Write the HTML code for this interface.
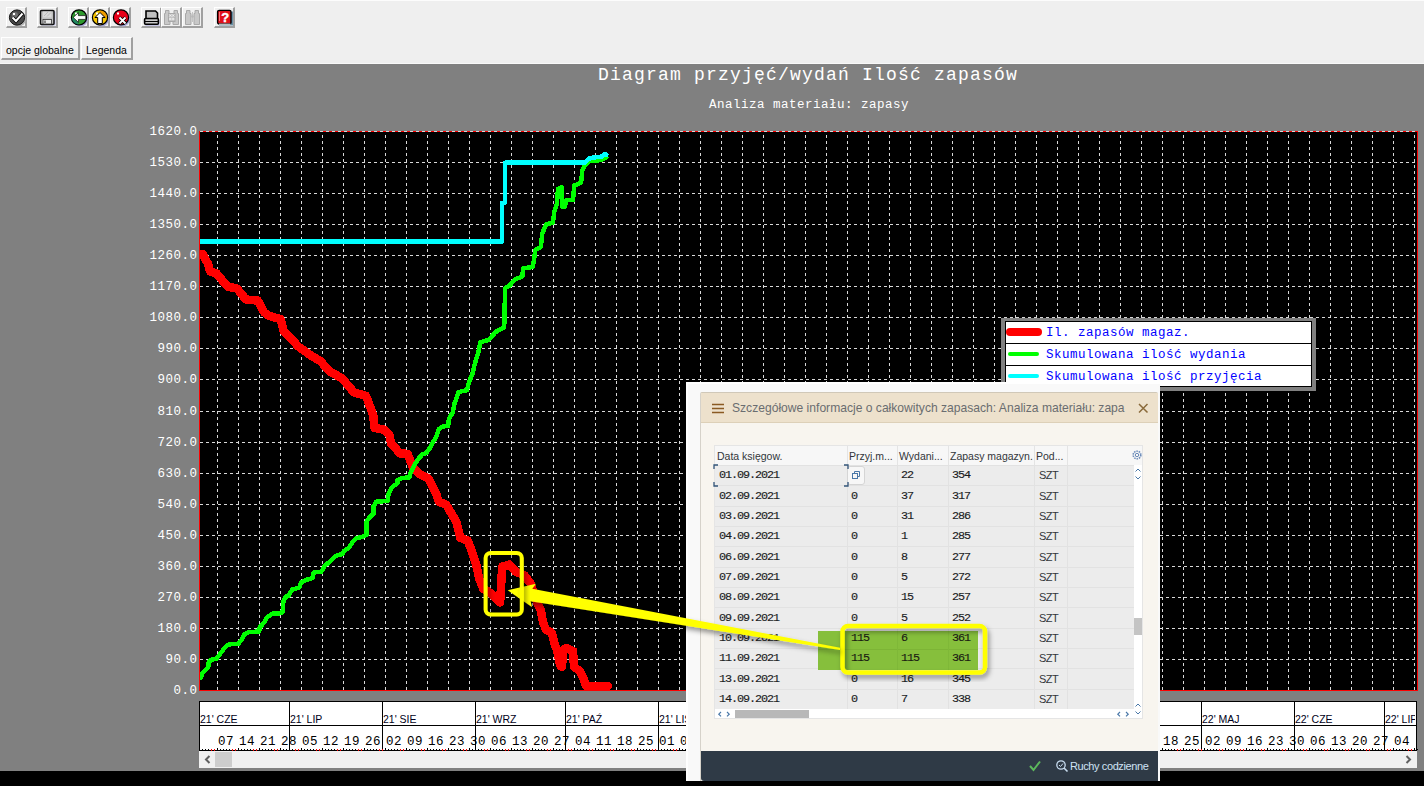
<!DOCTYPE html>
<html><head><meta charset="utf-8">
<style>
html,body{margin:0;padding:0;}
body{width:1424px;height:786px;overflow:hidden;position:relative;background:#808080;font-family:"Liberation Sans",sans-serif;}
.abs{position:absolute;}
.mono{font-family:"Liberation Mono",monospace;}
#tb{position:absolute;left:0;top:0;width:1424px;height:64px;background:#efefef;}
.tbtn{position:absolute;top:7px;width:21px;height:21px;box-sizing:border-box;border-style:solid;border-width:1px 2px 2px 1px;border-color:#fff #a0a0a0 #a0a0a0 #fff;background:#f0f0f0;}
.tbtn svg{position:absolute;left:1px;top:1px;}
.btn{position:absolute;top:38px;height:23px;box-sizing:border-box;border-style:solid;border-width:1px 2px 2px 1px;border-color:#fff #a0a0a0 #a0a0a0 #fff;background:#f0f0f0;font-size:10.5px;color:#000;line-height:14px;padding-top:5px;padding-left:4px;white-space:nowrap;}
.yl{position:absolute;left:140px;width:57.5px;text-align:right;color:#fff;font-size:12.5px;letter-spacing:0.5px;line-height:14px;font-family:"Liberation Mono",monospace;}
.ml{position:absolute;top:11px;font-size:10.5px;line-height:14px;color:#000020;white-space:nowrap;}
.dl{position:absolute;top:34px;font-size:12.5px;letter-spacing:0.5px;line-height:14px;color:#000;font-family:"Liberation Mono",monospace;white-space:nowrap;}
.dn{font-family:"Liberation Mono",monospace;font-size:11.8px;line-height:14px;letter-spacing:-1.08px;color:#1a1c1e;-webkit-text-stroke:0.15px #1a1c1e;white-space:nowrap;}
.lg{position:absolute;left:1046px;font-size:12.5px;letter-spacing:0.5px;line-height:14px;color:#0000ff;font-family:"Liberation Mono",monospace;white-space:nowrap;}
</style></head><body>

<div id="tb"></div>
<div class="abs" style="left:0;top:0;width:1424px;height:1px;background:#fcfcfc"></div>
<div class="abs" style="left:0;top:63px;width:1424px;height:1px;background:#f8f8f8"></div>
<div class="tbtn" style="left:6px"><svg width="19" height="19"><circle cx="10.5" cy="10" r="7.5" fill="#b0b0b0"/><circle cx="9" cy="8.5" r="7.6" fill="#4a4a4a" stroke="#111" stroke-width="1"/><circle cx="7" cy="6" r="3" fill="#707070"/><rect x="5" y="4" width="2" height="2" fill="#fff"/><path d="M4.5 8.5 L8 12 L14.5 4.5" stroke="#000" stroke-width="3.6" fill="none"/><path d="M4.5 8.5 L8 12 L14.5 4.5" stroke="#fff" stroke-width="2" fill="none"/></svg></div>
<div class="tbtn" style="left:37px"><svg width="19" height="19"><rect x="2.5" y="2.5" width="14" height="14" fill="#a8a8e0" opacity="0.6"/><rect x="1.5" y="1.5" width="13.5" height="14" rx="1" fill="#c0c0c0" stroke="#111" stroke-width="1.5"/><rect x="4" y="2.5" width="8.5" height="6" fill="#d8d8d8"/><path d="M5 7 L9 3 M8 7.5 L12 3.5" stroke="#bbb" stroke-width="1"/><rect x="4" y="10.5" width="8.5" height="4.5" fill="#e8e8e8" stroke="#333" stroke-width="0.8"/><rect x="5" y="11.5" width="2" height="2.5" fill="#888"/></svg></div>
<div class="tbtn" style="left:68px"><svg width="19" height="19"><circle cx="10.5" cy="10" r="7.5" fill="#a8a8d8"/><circle cx="9" cy="8.4" r="7.6" fill="#2e9a2e" stroke="#000" stroke-width="1.2"/><path d="M2 9 A7 7 0 0 0 8 15.5 L9 8 Z" fill="#1a8080" opacity="0.6"/><rect x="5" y="3.5" width="2" height="2" fill="#fff"/><path d="M3.2 8.4 L8.4 3.6 L8.4 6.6 L15.8 6.6 L15.8 10.4 L8.4 10.4 L8.4 13.4 Z" fill="#fff" stroke="#000" stroke-width="0.7"/></svg></div>
<div class="tbtn" style="left:89px"><svg width="19" height="19"><circle cx="10.5" cy="10" r="7.5" fill="#a8a8d8"/><circle cx="9" cy="8.4" r="7.6" fill="#f5c400" stroke="#000" stroke-width="1.2"/><path d="M9 1.5 A7 7 0 0 1 16 8.4 L9 8.4 Z" fill="#f08c00" opacity="0.7"/><rect x="5" y="3.5" width="2" height="2" fill="#fff"/><path d="M9 3.5 L14 8.5 L11.3 8.5 L11.3 14.5 L6.7 14.5 L6.7 8.5 L4 8.5 Z" fill="#fff" stroke="#000" stroke-width="1"/></svg></div>
<div class="tbtn" style="left:110px"><svg width="19" height="19"><circle cx="10.5" cy="10" r="7.5" fill="#a8a8d8"/><circle cx="9" cy="8.4" r="7.6" fill="#e8001a" stroke="#000" stroke-width="1.2"/><rect x="5" y="3.5" width="2" height="2" fill="#fff"/><path d="M7.5 8.5 L13.5 14.5 M13.5 8.5 L7.5 14.5" stroke="#000" stroke-width="3.4"/><path d="M7.5 8.5 L13.5 14.5 M13.5 8.5 L7.5 14.5" stroke="#fff" stroke-width="1.8"/></svg></div>
<div class="tbtn" style="left:141px"><svg width="19" height="19"><path d="M3 2 L12.5 2 L14.5 4 L14.5 10 L3 10 Z" fill="#c0c0c0" stroke="#000" stroke-width="1.6"/><rect x="2.5" y="11" width="14" height="6" fill="#a8a8e0" opacity="0.6"/><rect x="1.6" y="9.5" width="13.8" height="5.8" rx="1" fill="#c8c8c8" stroke="#000" stroke-width="1.6"/><path d="M2 12.5 H15" stroke="#000" stroke-width="1"/></svg></div>
<div class="tbtn" style="left:161px"><svg width="19" height="19"><path d="M2.5 1.5H6V4.5H7V15.5H1.5V4.5H2.5Z M11 1.5H14.5V4.5H15.5V15.5H10V4.5H11Z" fill="#c8c8c8" stroke="#a8a8a8" stroke-width="1"/><rect x="5.5" y="4.5" width="6.5" height="8" fill="#c4c4c4" stroke="#a8a8a8" stroke-width="1"/><path d="M6.3 5.5 L8.3 7.5 M8.3 5.5 L6.3 7.5 M9.3 5.5 L11.3 7.5 M11.3 5.5 L9.3 7.5 M6.3 9 L8.3 11 M8.3 9 L6.3 11 M9.3 9 L11.3 11 M11.3 9 L9.3 11" stroke="#f4f4f4" stroke-width="0.9"/></svg></div>
<div class="tbtn" style="left:182px"><svg width="19" height="19"><path d="M2.5 1.5H6V4.5H7V15.5H1.5V4.5H2.5Z M11 1.5H14.5V4.5H15.5V15.5H10V4.5H11Z" fill="#c8c8c8" stroke="#a8a8a8" stroke-width="1"/><circle cx="8.5" cy="7.5" r="1.3" fill="#b8b8b8"/><path d="M8.5 3 V13" stroke="#b8b8b8" stroke-width="0.8"/></svg></div>
<div class="tbtn" style="left:214px"><svg width="19" height="19"><rect x="3" y="2.5" width="14" height="14" fill="#6890a8"/><rect x="1.6" y="1.4" width="13.4" height="13.6" rx="1.5" fill="#e0101a" stroke="#000" stroke-width="1.4"/><path d="M3 15.2 H14.5" stroke="#fff" stroke-width="1"/><path d="M3.5 3 V12" stroke="#ff9090" stroke-width="0.8"/><text x="9.3" y="12.6" font-size="13" font-weight="bold" text-anchor="middle" fill="#fff" stroke="#fff" stroke-width="0.4" font-family="Liberation Sans">?</text></svg></div>
<div class="btn" style="left:1px;top:37px;width:79px">opcje globalne</div>
<div class="btn" style="left:81px;top:37px;width:52px">Legenda</div>
<div class="abs" style="left:0;top:771px;width:1424px;height:15px;background:#000"></div>
<div class="abs mono" style="left:598px;top:64px;font-size:18px;letter-spacing:1.2px;line-height:22px;color:#fff;white-space:nowrap">Diagram przyjęć/wydań Ilość zapasów</div>
<div class="abs mono" style="left:709px;top:98px;font-size:12.5px;letter-spacing:0.5px;line-height:14px;color:#fff;white-space:nowrap">Analiza materiału: zapasy</div>
<div class="yl" style="top:125px">1620.0</div>
<div class="yl" style="top:156px">1530.0</div>
<div class="yl" style="top:187px">1440.0</div>
<div class="yl" style="top:218px">1350.0</div>
<div class="yl" style="top:249px">1260.0</div>
<div class="yl" style="top:280px">1170.0</div>
<div class="yl" style="top:311px">1080.0</div>
<div class="yl" style="top:342px">990.0</div>
<div class="yl" style="top:373px">900.0</div>
<div class="yl" style="top:405px">810.0</div>
<div class="yl" style="top:436px">720.0</div>
<div class="yl" style="top:467px">630.0</div>
<div class="yl" style="top:498px">540.0</div>
<div class="yl" style="top:529px">450.0</div>
<div class="yl" style="top:560px">360.0</div>
<div class="yl" style="top:591px">270.0</div>
<div class="yl" style="top:622px">180.0</div>
<div class="yl" style="top:653px">90.0</div>
<div class="yl" style="top:684px">0.0</div>
<svg class="abs" style="left:0;top:0" width="1424" height="786" shape-rendering="crispEdges">
<rect x="199" y="131" width="1219" height="560" fill="#000"/>
<path d="M200 162.5H1417 M200 193.5H1417 M200 224.5H1417 M200 255.5H1417 M200 286.5H1417 M200 317.5H1417 M200 348.5H1417 M200 379.5H1417 M200 411.5H1417 M200 442.5H1417 M200 473.5H1417 M200 504.5H1417 M200 535.5H1417 M200 566.5H1417 M200 597.5H1417 M200 628.5H1417 M200 659.5H1417" stroke="#d8d8d8" stroke-width="1" stroke-dasharray="3 3" fill="none"/>
<path d="M217.5 132V690 M238.5 132V690 M259.5 132V690 M280.5 132V690 M301.5 132V690 M322.5 132V690 M343.5 132V690 M364.5 132V690 M385.5 132V690 M406.5 132V690 M427.5 132V690 M448.5 132V690 M469.5 132V690 M490.5 132V690 M511.5 132V690 M532.5 132V690 M553.5 132V690 M574.5 132V690 M595.5 132V690 M616.5 132V690 M637.5 132V690 M658.5 132V690 M679.5 132V690 M700.5 132V690 M721.5 132V690 M742.5 132V690 M763.5 132V690 M784.5 132V690 M805.5 132V690 M826.5 132V690 M847.5 132V690 M868.5 132V690 M889.5 132V690 M910.5 132V690 M931.5 132V690 M952.5 132V690 M973.5 132V690 M994.5 132V690 M1015.5 132V690 M1036.5 132V690 M1057.5 132V690 M1078.5 132V690 M1099.5 132V690 M1120.5 132V690 M1141.5 132V690 M1162.5 132V690 M1183.5 132V690 M1204.5 132V690 M1225.5 132V690 M1246.5 132V690 M1267.5 132V690 M1288.5 132V690 M1309.5 132V690 M1330.5 132V690 M1351.5 132V690 M1372.5 132V690 M1393.5 132V690 M1414.5 132V690" stroke="#d8d8d8" stroke-width="1" stroke-dasharray="3 3" stroke-dashoffset="3" fill="none"/>
<path d="M199 131.5H1418" stroke="#d8d8d8" stroke-width="1"/>
<path d="M203 131.5H1418" stroke="#ff0000" stroke-width="1" stroke-dasharray="3 3"/>
<path d="M199.5 131V691 M199 690.5H1418 M1417.5 131V691" stroke="#ff0000" stroke-width="1" fill="none"/>
</svg>
<svg class="abs" style="left:0;top:0" width="1424" height="786" shape-rendering="crispEdges">
<clipPath id="pc"><rect x="200" y="132" width="1217" height="558"/></clipPath>
<g clip-path="url(#pc)" fill="none" stroke-linejoin="round" stroke-linecap="round">
<polyline points="202.6,254.0 208.0,263.8 210.2,271.4 216.6,273.5 227.5,286.5 237.2,288.7 245.9,299.5 257.8,300.6 264.3,312.5 268.6,315.8 280.5,319.0 283.7,330.9 292.4,339.6 297.8,346.1 309.7,354.7 320.5,361.2 329.2,371.0 342.2,378.5 354.1,392.6 366.0,395.8 373.2,415.1 374.5,427.8 384.0,429.7 389.7,435.4 391.0,443.7 395.4,448.2 399.9,453.3 407.5,453.9 410.1,460.3 413.3,468.5 420.9,474.9 428.5,478.7 432.3,486.3 436.2,494.0 438.7,501.6 446.3,504.8 456.2,521.5 460.3,537.9 467.6,540.5 471.8,551.0 476.0,563.6 479.1,578.3 483.3,588.8 490.7,593.0 500.1,602.4 502.2,566.7 509.6,564.6 515.9,572.0 524.3,575.1 530.5,583.5 537.0,602.0 541.0,611.0 543.0,622.0 546.0,630.0 552.0,633.0 555.0,645.0 557.0,650.0 560.0,665.0 562.0,667.0 563.0,650.0 566.0,648.0 573.0,651.0 574.0,667.0 580.0,671.0 584.0,680.0 586.0,686.0 608.0,686.0" stroke="#ff0000" stroke-width="8.5"/>
<polyline points="200.7,677.9 202.4,673.3 204.7,671.0 208.2,667.6 208.7,662.4 211.6,659.6 216.2,659.0 220.2,653.8 223.6,649.2 227.1,645.2 231.1,644.1 238.0,644.1 241.4,640.1 244.8,633.8 249.4,632.1 259.1,631.5 259.7,627.5 264.3,622.3 266.6,617.8 272.3,613.7 280.9,613.2 283.2,610.9 283.2,602.3 285.1,597.2 288.9,595.3 292.1,589.6 299.1,587.7 301.6,582.0 305.4,580.1 312.4,578.2 313.7,572.4 321.3,571.8 324.5,566.1 328.3,562.9 332.2,559.1 336.0,555.9 342.3,554.0 344.2,550.8 349.3,547.6 352.5,541.9 356.3,538.1 362.7,536.8 366.5,534.9 366.5,521.5 370.3,516.5 373.5,513.9 373.5,506.3 376.4,501.6 387.8,501.0 388.4,494.0 391.6,487.6 397.4,483.2 397.4,480.0 402.4,478.0 409.4,477.4 410.7,472.3 414.5,464.7 418.3,459.0 422.2,454.5 426.0,453.3 429.8,448.2 433.0,442.4 436.8,435.4 438.7,429.1 443.2,426.5 448.2,425.9 448.9,418.9 452.7,412.5 454.5,403.6 458.4,392.1 467.0,390.2 468.9,382.6 472.7,373.0 474.6,364.5 478.4,352.0 480.3,342.5 488.9,339.7 495.6,332.0 504.2,327.3 505.1,288.1 509.9,285.3 514.7,279.5 522.3,276.7 523.2,268.3 532.8,267.0 535.5,249.6 540.9,247.0 542.2,233.6 546.2,224.2 552.9,222.9 554.2,212.2 556.9,204.2 558.0,189.0 561.5,187.0 562.5,206.8 564.9,206.8 566.3,200.2 573.0,200.2 574.3,185.5 581.0,182.8 582.3,170.7 585.0,165.4 589.0,161.4 601.0,160.0 606.4,157.4" stroke="#00ff00" stroke-width="4.5"/>
<polyline points="199.0,241.5 502.1,241.5 502.1,202.8 504.8,202.8 504.8,162.7 585.0,162.7 589.0,158.7 593.0,157.4 601.0,157.0 603.7,154.7 606.4,154.7" stroke="#00ffff" stroke-width="4.5"/>
</g></svg>
<div class="abs" style="left:1001px;top:318px;width:315px;height:73px;background:#808080"></div>
<div class="abs" style="left:1005px;top:321px;width:307px;height:66px;background:#fff;border:1px solid #000;box-sizing:border-box"></div>
<div class="abs" style="left:1005px;top:343px;width:307px;height:1px;background:#000"></div>
<div class="abs" style="left:1005px;top:365px;width:307px;height:1px;background:#000"></div>
<div class="abs" style="left:1006px;top:328px;width:36px;height:8px;border-radius:4px;background:#ff0000"></div>
<div class="abs" style="left:1008px;top:352px;width:31px;height:4px;border-radius:2px;background:#00ff00"></div>
<div class="abs" style="left:1008px;top:374px;width:31px;height:4px;border-radius:2px;background:#00ffff"></div>
<div class="lg" style="top:326px">Il. zapasów magaz.</div>
<div class="lg" style="top:348px">Skumulowana ilość wydania</div>
<div class="lg" style="top:370px">Skumulowana ilość przyjęcia</div>
<div class="abs" style="left:199px;top:701px;width:1218px;height:50px;background:#fff"></div>
<div class="abs" style="left:199px;top:701px;width:1216px;height:50px;overflow:hidden">
<div class="ml" style="left:1px">21' CZE</div>
<div class="dl" style="left:19px">07</div>
<div class="dl" style="left:40px">14</div>
<div class="dl" style="left:61px">21</div>
<div class="dl" style="left:82px">28</div>
<div class="ml" style="left:91px">21' LIP</div>
<div class="dl" style="left:103px">05</div>
<div class="dl" style="left:124px">12</div>
<div class="dl" style="left:145px">19</div>
<div class="dl" style="left:166px">26</div>
<div class="ml" style="left:184px">21' SIE</div>
<div class="dl" style="left:187px">02</div>
<div class="dl" style="left:208px">09</div>
<div class="dl" style="left:229px">16</div>
<div class="dl" style="left:250px">23</div>
<div class="dl" style="left:271px">30</div>
<div class="ml" style="left:277px">21' WRZ</div>
<div class="dl" style="left:292px">06</div>
<div class="dl" style="left:313px">13</div>
<div class="dl" style="left:334px">20</div>
<div class="dl" style="left:355px">27</div>
<div class="ml" style="left:367px">21' PAŹ</div>
<div class="dl" style="left:376px">04</div>
<div class="dl" style="left:397px">11</div>
<div class="dl" style="left:418px">18</div>
<div class="dl" style="left:439px">25</div>
<div class="ml" style="left:460px">21' LIS</div>
<div class="dl" style="left:460px">01</div>
<div class="dl" style="left:481px">08</div>
<div class="dl" style="left:502px">15</div>
<div class="dl" style="left:523px">22</div>
<div class="dl" style="left:544px">29</div>
<div class="ml" style="left:550px">21' GRU</div>
<div class="dl" style="left:565px">06</div>
<div class="dl" style="left:586px">13</div>
<div class="dl" style="left:607px">20</div>
<div class="dl" style="left:628px">27</div>
<div class="ml" style="left:643px">22' STY</div>
<div class="dl" style="left:649px">03</div>
<div class="dl" style="left:670px">10</div>
<div class="dl" style="left:691px">17</div>
<div class="dl" style="left:712px">24</div>
<div class="dl" style="left:733px">31</div>
<div class="ml" style="left:736px">22' LUT</div>
<div class="dl" style="left:754px">07</div>
<div class="dl" style="left:775px">14</div>
<div class="dl" style="left:796px">21</div>
<div class="dl" style="left:817px">28</div>
<div class="ml" style="left:820px">22' MAR</div>
<div class="dl" style="left:838px">07</div>
<div class="dl" style="left:859px">14</div>
<div class="dl" style="left:880px">21</div>
<div class="dl" style="left:901px">28</div>
<div class="ml" style="left:913px">22' KWI</div>
<div class="dl" style="left:922px">04</div>
<div class="dl" style="left:943px">11</div>
<div class="dl" style="left:964px">18</div>
<div class="dl" style="left:985px">25</div>
<div class="ml" style="left:1003px">22' MAJ</div>
<div class="dl" style="left:1006px">02</div>
<div class="dl" style="left:1027px">09</div>
<div class="dl" style="left:1048px">16</div>
<div class="dl" style="left:1069px">23</div>
<div class="dl" style="left:1090px">30</div>
<div class="ml" style="left:1096px">22' CZE</div>
<div class="dl" style="left:1111px">06</div>
<div class="dl" style="left:1132px">13</div>
<div class="dl" style="left:1153px">20</div>
<div class="dl" style="left:1174px">27</div>
<div class="ml" style="left:1186px">22' LIP</div>
<div class="dl" style="left:1195px">04</div>
<div class="dl" style="left:1216px">11</div>
</div>
<svg class="abs" style="left:0;top:0" width="1424" height="786" shape-rendering="crispEdges">
<path d="M199 701.5H1417 M199 725.5H1417 M199 750.5H1417 M199.5 701V751 M1416.5 701V751 M199.5 701V751 M202.5 749V750 M205.5 749V750 M208.5 749V750 M211.5 749V750 M214.5 749V750 M217.5 748V750 M220.5 749V750 M223.5 749V750 M226.5 749V750 M229.5 749V750 M232.5 749V750 M235.5 749V750 M238.5 748V750 M241.5 749V750 M244.5 749V750 M247.5 749V750 M250.5 749V750 M253.5 749V750 M256.5 749V750 M259.5 748V750 M262.5 749V750 M265.5 749V750 M268.5 749V750 M271.5 749V750 M274.5 749V750 M277.5 749V750 M280.5 748V750 M283.5 749V750 M286.5 749V750 M289.5 701V751 M289.5 749V750 M292.5 749V750 M295.5 749V750 M298.5 749V750 M301.5 748V750 M304.5 749V750 M307.5 749V750 M310.5 749V750 M313.5 749V750 M316.5 749V750 M319.5 749V750 M322.5 748V750 M325.5 749V750 M328.5 749V750 M331.5 749V750 M334.5 749V750 M337.5 749V750 M340.5 749V750 M343.5 748V750 M346.5 749V750 M349.5 749V750 M352.5 749V750 M355.5 749V750 M358.5 749V750 M361.5 749V750 M364.5 748V750 M367.5 749V750 M370.5 749V750 M373.5 749V750 M376.5 749V750 M379.5 749V750 M382.5 701V751 M382.5 749V750 M385.5 748V750 M388.5 749V750 M391.5 749V750 M394.5 749V750 M397.5 749V750 M400.5 749V750 M403.5 749V750 M406.5 748V750 M409.5 749V750 M412.5 749V750 M415.5 749V750 M418.5 749V750 M421.5 749V750 M424.5 749V750 M427.5 748V750 M430.5 749V750 M433.5 749V750 M436.5 749V750 M439.5 749V750 M442.5 749V750 M445.5 749V750 M448.5 748V750 M451.5 749V750 M454.5 749V750 M457.5 749V750 M460.5 749V750 M463.5 749V750 M466.5 749V750 M469.5 748V750 M472.5 749V750 M475.5 701V751 M475.5 749V750 M478.5 749V750 M481.5 749V750 M484.5 749V750 M487.5 749V750 M490.5 748V750 M493.5 749V750 M496.5 749V750 M499.5 749V750 M502.5 749V750 M505.5 749V750 M508.5 749V750 M511.5 748V750 M514.5 749V750 M517.5 749V750 M520.5 749V750 M523.5 749V750 M526.5 749V750 M529.5 749V750 M532.5 748V750 M535.5 749V750 M538.5 749V750 M541.5 749V750 M544.5 749V750 M547.5 749V750 M550.5 749V750 M553.5 748V750 M556.5 749V750 M559.5 749V750 M562.5 749V750 M565.5 701V751 M565.5 749V750 M568.5 749V750 M571.5 749V750 M574.5 748V750 M577.5 749V750 M580.5 749V750 M583.5 749V750 M586.5 749V750 M589.5 749V750 M592.5 749V750 M595.5 748V750 M598.5 749V750 M601.5 749V750 M604.5 749V750 M607.5 749V750 M610.5 749V750 M613.5 749V750 M616.5 748V750 M619.5 749V750 M622.5 749V750 M625.5 749V750 M628.5 749V750 M631.5 749V750 M634.5 749V750 M637.5 748V750 M640.5 749V750 M643.5 749V750 M646.5 749V750 M649.5 749V750 M652.5 749V750 M655.5 749V750 M658.5 701V751 M658.5 748V750 M661.5 749V750 M664.5 749V750 M667.5 749V750 M670.5 749V750 M673.5 749V750 M676.5 749V750 M679.5 748V750 M682.5 749V750 M685.5 749V750 M688.5 749V750 M691.5 749V750 M694.5 749V750 M697.5 749V750 M700.5 748V750 M703.5 749V750 M706.5 749V750 M709.5 749V750 M712.5 749V750 M715.5 749V750 M718.5 749V750 M721.5 748V750 M724.5 749V750 M727.5 749V750 M730.5 749V750 M733.5 749V750 M736.5 749V750 M739.5 749V750 M742.5 748V750 M745.5 749V750 M748.5 701V751 M748.5 749V750 M751.5 749V750 M754.5 749V750 M757.5 749V750 M760.5 749V750 M763.5 748V750 M766.5 749V750 M769.5 749V750 M772.5 749V750 M775.5 749V750 M778.5 749V750 M781.5 749V750 M784.5 748V750 M787.5 749V750 M790.5 749V750 M793.5 749V750 M796.5 749V750 M799.5 749V750 M802.5 749V750 M805.5 748V750 M808.5 749V750 M811.5 749V750 M814.5 749V750 M817.5 749V750 M820.5 749V750 M823.5 749V750 M826.5 748V750 M829.5 749V750 M832.5 749V750 M835.5 749V750 M838.5 749V750 M841.5 701V751 M841.5 749V750 M844.5 749V750 M847.5 748V750 M850.5 749V750 M853.5 749V750 M856.5 749V750 M859.5 749V750 M862.5 749V750 M865.5 749V750 M868.5 748V750 M871.5 749V750 M874.5 749V750 M877.5 749V750 M880.5 749V750 M883.5 749V750 M886.5 749V750 M889.5 748V750 M892.5 749V750 M895.5 749V750 M898.5 749V750 M901.5 749V750 M904.5 749V750 M907.5 749V750 M910.5 748V750 M913.5 749V750 M916.5 749V750 M919.5 749V750 M922.5 749V750 M925.5 749V750 M928.5 749V750 M931.5 748V750 M934.5 701V751 M934.5 749V750 M937.5 749V750 M940.5 749V750 M943.5 749V750 M946.5 749V750 M949.5 749V750 M952.5 748V750 M955.5 749V750 M958.5 749V750 M961.5 749V750 M964.5 749V750 M967.5 749V750 M970.5 749V750 M973.5 748V750 M976.5 749V750 M979.5 749V750 M982.5 749V750 M985.5 749V750 M988.5 749V750 M991.5 749V750 M994.5 748V750 M997.5 749V750 M1000.5 749V750 M1003.5 749V750 M1006.5 749V750 M1009.5 749V750 M1012.5 749V750 M1015.5 748V750 M1018.5 701V751 M1018.5 749V750 M1021.5 749V750 M1024.5 749V750 M1027.5 749V750 M1030.5 749V750 M1033.5 749V750 M1036.5 748V750 M1039.5 749V750 M1042.5 749V750 M1045.5 749V750 M1048.5 749V750 M1051.5 749V750 M1054.5 749V750 M1057.5 748V750 M1060.5 749V750 M1063.5 749V750 M1066.5 749V750 M1069.5 749V750 M1072.5 749V750 M1075.5 749V750 M1078.5 748V750 M1081.5 749V750 M1084.5 749V750 M1087.5 749V750 M1090.5 749V750 M1093.5 749V750 M1096.5 749V750 M1099.5 748V750 M1102.5 749V750 M1105.5 749V750 M1108.5 749V750 M1111.5 701V751 M1111.5 749V750 M1114.5 749V750 M1117.5 749V750 M1120.5 748V750 M1123.5 749V750 M1126.5 749V750 M1129.5 749V750 M1132.5 749V750 M1135.5 749V750 M1138.5 749V750 M1141.5 748V750 M1144.5 749V750 M1147.5 749V750 M1150.5 749V750 M1153.5 749V750 M1156.5 749V750 M1159.5 749V750 M1162.5 748V750 M1165.5 749V750 M1168.5 749V750 M1171.5 749V750 M1174.5 749V750 M1177.5 749V750 M1180.5 749V750 M1183.5 748V750 M1186.5 749V750 M1189.5 749V750 M1192.5 749V750 M1195.5 749V750 M1198.5 749V750 M1201.5 701V751 M1201.5 749V750 M1204.5 748V750 M1207.5 749V750 M1210.5 749V750 M1213.5 749V750 M1216.5 749V750 M1219.5 749V750 M1222.5 749V750 M1225.5 748V750 M1228.5 749V750 M1231.5 749V750 M1234.5 749V750 M1237.5 749V750 M1240.5 749V750 M1243.5 749V750 M1246.5 748V750 M1249.5 749V750 M1252.5 749V750 M1255.5 749V750 M1258.5 749V750 M1261.5 749V750 M1264.5 749V750 M1267.5 748V750 M1270.5 749V750 M1273.5 749V750 M1276.5 749V750 M1279.5 749V750 M1282.5 749V750 M1285.5 749V750 M1288.5 748V750 M1291.5 749V750 M1294.5 701V751 M1294.5 749V750 M1297.5 749V750 M1300.5 749V750 M1303.5 749V750 M1306.5 749V750 M1309.5 748V750 M1312.5 749V750 M1315.5 749V750 M1318.5 749V750 M1321.5 749V750 M1324.5 749V750 M1327.5 749V750 M1330.5 748V750 M1333.5 749V750 M1336.5 749V750 M1339.5 749V750 M1342.5 749V750 M1345.5 749V750 M1348.5 749V750 M1351.5 748V750 M1354.5 749V750 M1357.5 749V750 M1360.5 749V750 M1363.5 749V750 M1366.5 749V750 M1369.5 749V750 M1372.5 748V750 M1375.5 749V750 M1378.5 749V750 M1381.5 749V750 M1384.5 701V751 M1384.5 749V750 M1387.5 749V750 M1390.5 749V750 M1393.5 748V750 M1396.5 749V750 M1399.5 749V750 M1402.5 749V750 M1405.5 749V750 M1408.5 749V750 M1411.5 749V750 M1414.5 748V750 M1417.5 749V750" stroke="#000" stroke-width="1" fill="none"/>
<path d="M211.5 749V751 M214.5 749V751 M232.5 749V751 M235.5 749V751 M253.5 749V751 M256.5 749V751 M274.5 749V751 M277.5 749V751 M295.5 749V751 M298.5 749V751 M316.5 749V751 M319.5 749V751 M337.5 749V751 M340.5 749V751 M358.5 749V751 M361.5 749V751 M379.5 749V751 M382.5 749V751 M400.5 749V751 M403.5 749V751 M421.5 749V751 M424.5 749V751 M442.5 749V751 M445.5 749V751 M463.5 749V751 M466.5 749V751 M484.5 749V751 M487.5 749V751 M505.5 749V751 M508.5 749V751 M526.5 749V751 M529.5 749V751 M547.5 749V751 M550.5 749V751 M568.5 749V751 M571.5 749V751 M589.5 749V751 M592.5 749V751 M610.5 749V751 M613.5 749V751 M631.5 749V751 M634.5 749V751 M652.5 749V751 M655.5 749V751 M673.5 749V751 M676.5 749V751 M694.5 749V751 M697.5 749V751 M715.5 749V751 M718.5 749V751 M736.5 749V751 M739.5 749V751 M757.5 749V751 M760.5 749V751 M778.5 749V751 M781.5 749V751 M799.5 749V751 M802.5 749V751 M820.5 749V751 M823.5 749V751 M841.5 749V751 M844.5 749V751 M862.5 749V751 M865.5 749V751 M883.5 749V751 M886.5 749V751 M904.5 749V751 M907.5 749V751 M925.5 749V751 M928.5 749V751 M946.5 749V751 M949.5 749V751 M967.5 749V751 M970.5 749V751 M988.5 749V751 M991.5 749V751 M1009.5 749V751 M1012.5 749V751 M1030.5 749V751 M1033.5 749V751 M1051.5 749V751 M1054.5 749V751 M1072.5 749V751 M1075.5 749V751 M1093.5 749V751 M1096.5 749V751 M1114.5 749V751 M1117.5 749V751 M1135.5 749V751 M1138.5 749V751 M1156.5 749V751 M1159.5 749V751 M1177.5 749V751 M1180.5 749V751 M1198.5 749V751 M1201.5 749V751 M1219.5 749V751 M1222.5 749V751 M1240.5 749V751 M1243.5 749V751 M1261.5 749V751 M1264.5 749V751 M1282.5 749V751 M1285.5 749V751 M1303.5 749V751 M1306.5 749V751 M1324.5 749V751 M1327.5 749V751 M1345.5 749V751 M1348.5 749V751 M1366.5 749V751 M1369.5 749V751 M1387.5 749V751 M1390.5 749V751 M1408.5 749V751 M1411.5 749V751" stroke="#ff0000" stroke-width="1" fill="none"/>
</svg>
<div class="abs" style="left:199px;top:751px;width:1218px;height:17px;background:#f0f0f0"></div>
<div class="abs" style="left:215px;top:752px;width:17px;height:15px;background:#cdcdcd"></div>
<svg class="abs" style="left:201px;top:753px" width="12" height="14"><path d="M8.5 3 L5 6.5 L8.5 10" stroke="#606060" stroke-width="2" fill="none"/></svg>
<svg class="abs" style="left:1402px;top:753px" width="12" height="14"><path d="M4.5 3 L8 6.5 L4.5 10" stroke="#606060" stroke-width="2" fill="none"/></svg>
<div class="abs" style="left:686px;top:382px;width:474px;height:399px;background:#f9f9f9;border-top:2px solid #fff;border-left:2px solid #fff;box-sizing:border-box"></div>
<div class="abs" style="left:700px;top:392px;width:458px;height:389px;background:#f8f5ef;border-left:1px solid #d6d2ca;border-top:1px solid #d0c8b8;box-sizing:border-box;border-radius:2px 2px 0 0"></div>
<div class="abs" style="left:701px;top:393px;width:457px;height:30px;background:#ede1cc;border-bottom:1px solid #ddd0b8;box-sizing:border-box"></div>
<svg class="abs" style="left:711px;top:402px" width="14" height="12"><path d="M1 2.5H13 M1 6.5H13 M1 10.5H13" stroke="#8a5a22" stroke-width="1.6"/></svg>
<div class="abs" style="left:732px;top:401px;font-size:12.1px;line-height:15px;color:#6a6d70;white-space:nowrap">Szczegółowe informacje o całkowitych zapasach: Analiza materiału: zapa</div>
<svg class="abs" style="left:1137px;top:402px" width="12" height="12"><path d="M2 2 L10.5 10.5 M10.5 2 L2 10.5" stroke="#8a6a3a" stroke-width="1.5"/></svg>
<div class="abs" style="left:714px;top:445px;width:429px;height:274px;background:#fff;border:1px solid #e5e5e5;box-sizing:border-box"></div>
<div class="abs" style="left:715px;top:446px;width:427px;height:19px;background:#f7f7f7"></div>
<div class="abs" style="left:847px;top:446px;width:1px;height:262px;background:#e4e4e4"></div>
<div class="abs" style="left:897px;top:446px;width:1px;height:262px;background:#e4e4e4"></div>
<div class="abs" style="left:948px;top:446px;width:1px;height:262px;background:#e4e4e4"></div>
<div class="abs" style="left:1034px;top:446px;width:1px;height:262px;background:#e4e4e4"></div>
<div class="abs" style="left:1067px;top:446px;width:1px;height:262px;background:#e4e4e4"></div>
<div class="abs" style="left:717px;top:449px;font-size:10.5px;line-height:14px;color:#32363a;white-space:nowrap">Data księgow.</div>
<div class="abs" style="left:849px;top:449px;font-size:10.5px;line-height:14px;color:#32363a;white-space:nowrap">Przyj.m...</div>
<div class="abs" style="left:899px;top:449px;font-size:10.5px;line-height:14px;color:#32363a;white-space:nowrap">Wydani...</div>
<div class="abs" style="left:950px;top:449px;font-size:10.5px;line-height:14px;color:#32363a;white-space:nowrap">Zapasy magazyn.</div>
<div class="abs" style="left:1036px;top:449px;font-size:10.5px;line-height:14px;color:#32363a;white-space:nowrap">Pod...</div>
<div class="abs" style="left:715px;top:465.00px;width:419px;height:20.33px;background:#ececec;border-top:1px solid #e2e2e2;box-sizing:border-box"></div>
<div class="abs" style="left:715px;top:485.33px;width:419px;height:20.33px;background:#ececec;border-top:1px solid #e2e2e2;box-sizing:border-box"></div>
<div class="abs" style="left:715px;top:505.66px;width:419px;height:20.33px;background:#ececec;border-top:1px solid #e2e2e2;box-sizing:border-box"></div>
<div class="abs" style="left:715px;top:525.99px;width:419px;height:20.33px;background:#ececec;border-top:1px solid #e2e2e2;box-sizing:border-box"></div>
<div class="abs" style="left:715px;top:546.32px;width:419px;height:20.33px;background:#ececec;border-top:1px solid #e2e2e2;box-sizing:border-box"></div>
<div class="abs" style="left:715px;top:566.65px;width:419px;height:20.33px;background:#ececec;border-top:1px solid #e2e2e2;box-sizing:border-box"></div>
<div class="abs" style="left:715px;top:586.98px;width:419px;height:20.33px;background:#ececec;border-top:1px solid #e2e2e2;box-sizing:border-box"></div>
<div class="abs" style="left:715px;top:607.31px;width:419px;height:20.33px;background:#ececec;border-top:1px solid #e2e2e2;box-sizing:border-box"></div>
<div class="abs" style="left:715px;top:627.64px;width:419px;height:20.33px;background:#ececec;border-top:1px solid #e2e2e2;box-sizing:border-box"></div>
<div class="abs" style="left:715px;top:647.97px;width:419px;height:20.33px;background:#ececec;border-top:1px solid #e2e2e2;box-sizing:border-box"></div>
<div class="abs" style="left:715px;top:668.30px;width:419px;height:20.33px;background:#ececec;border-top:1px solid #e2e2e2;box-sizing:border-box"></div>
<div class="abs" style="left:715px;top:688.63px;width:419px;height:20.37px;background:#ececec;border-top:1px solid #e2e2e2;box-sizing:border-box"></div>
<div class="abs dn" style="left:719px;top:468.2px">01.09.2021</div>
<div class="abs dn" style="left:901px;top:468.2px">22</div>
<div class="abs dn" style="left:952px;top:468.2px">354</div>
<div class="abs" style="left:1039px;top:468.2px;font-size:11px;letter-spacing:-0.5px;line-height:14px;color:#32363a">SZT</div>
<div class="abs dn" style="left:719px;top:488.5px">02.09.2021</div>
<div class="abs dn" style="left:851px;top:488.5px">0</div>
<div class="abs dn" style="left:901px;top:488.5px">37</div>
<div class="abs dn" style="left:952px;top:488.5px">317</div>
<div class="abs" style="left:1039px;top:488.5px;font-size:11px;letter-spacing:-0.5px;line-height:14px;color:#32363a">SZT</div>
<div class="abs dn" style="left:719px;top:508.9px">03.09.2021</div>
<div class="abs dn" style="left:851px;top:508.9px">0</div>
<div class="abs dn" style="left:901px;top:508.9px">31</div>
<div class="abs dn" style="left:952px;top:508.9px">286</div>
<div class="abs" style="left:1039px;top:508.9px;font-size:11px;letter-spacing:-0.5px;line-height:14px;color:#32363a">SZT</div>
<div class="abs dn" style="left:719px;top:529.2px">04.09.2021</div>
<div class="abs dn" style="left:851px;top:529.2px">0</div>
<div class="abs dn" style="left:901px;top:529.2px">1</div>
<div class="abs dn" style="left:952px;top:529.2px">285</div>
<div class="abs" style="left:1039px;top:529.2px;font-size:11px;letter-spacing:-0.5px;line-height:14px;color:#32363a">SZT</div>
<div class="abs dn" style="left:719px;top:549.5px">06.09.2021</div>
<div class="abs dn" style="left:851px;top:549.5px">0</div>
<div class="abs dn" style="left:901px;top:549.5px">8</div>
<div class="abs dn" style="left:952px;top:549.5px">277</div>
<div class="abs" style="left:1039px;top:549.5px;font-size:11px;letter-spacing:-0.5px;line-height:14px;color:#32363a">SZT</div>
<div class="abs dn" style="left:719px;top:569.9px">07.09.2021</div>
<div class="abs dn" style="left:851px;top:569.9px">0</div>
<div class="abs dn" style="left:901px;top:569.9px">5</div>
<div class="abs dn" style="left:952px;top:569.9px">272</div>
<div class="abs" style="left:1039px;top:569.9px;font-size:11px;letter-spacing:-0.5px;line-height:14px;color:#32363a">SZT</div>
<div class="abs dn" style="left:719px;top:590.2px">08.09.2021</div>
<div class="abs dn" style="left:851px;top:590.2px">0</div>
<div class="abs dn" style="left:901px;top:590.2px">15</div>
<div class="abs dn" style="left:952px;top:590.2px">257</div>
<div class="abs" style="left:1039px;top:590.2px;font-size:11px;letter-spacing:-0.5px;line-height:14px;color:#32363a">SZT</div>
<div class="abs dn" style="left:719px;top:610.5px">09.09.2021</div>
<div class="abs dn" style="left:851px;top:610.5px">0</div>
<div class="abs dn" style="left:901px;top:610.5px">5</div>
<div class="abs dn" style="left:952px;top:610.5px">252</div>
<div class="abs" style="left:1039px;top:610.5px;font-size:11px;letter-spacing:-0.5px;line-height:14px;color:#32363a">SZT</div>
<div class="abs dn" style="left:719px;top:630.8px">10.09.2021</div>
<div class="abs dn" style="left:851px;top:630.8px">115</div>
<div class="abs dn" style="left:901px;top:630.8px">6</div>
<div class="abs dn" style="left:952px;top:630.8px">361</div>
<div class="abs" style="left:1039px;top:630.8px;font-size:11px;letter-spacing:-0.5px;line-height:14px;color:#32363a">SZT</div>
<div class="abs dn" style="left:719px;top:651.2px">11.09.2021</div>
<div class="abs dn" style="left:851px;top:651.2px">115</div>
<div class="abs dn" style="left:901px;top:651.2px">115</div>
<div class="abs dn" style="left:952px;top:651.2px">361</div>
<div class="abs" style="left:1039px;top:651.2px;font-size:11px;letter-spacing:-0.5px;line-height:14px;color:#32363a">SZT</div>
<div class="abs dn" style="left:719px;top:671.5px">13.09.2021</div>
<div class="abs dn" style="left:851px;top:671.5px">0</div>
<div class="abs dn" style="left:901px;top:671.5px">16</div>
<div class="abs dn" style="left:952px;top:671.5px">345</div>
<div class="abs" style="left:1039px;top:671.5px;font-size:11px;letter-spacing:-0.5px;line-height:14px;color:#32363a">SZT</div>
<div class="abs dn" style="left:719px;top:691.8px">14.09.2021</div>
<div class="abs dn" style="left:851px;top:691.8px">0</div>
<div class="abs dn" style="left:901px;top:691.8px">7</div>
<div class="abs dn" style="left:952px;top:691.8px">338</div>
<div class="abs" style="left:1039px;top:691.8px;font-size:11px;letter-spacing:-0.5px;line-height:14px;color:#32363a">SZT</div>
<div class="abs" style="left:847px;top:465px;width:1px;height:244px;background:#e2e2e2"></div>
<div class="abs" style="left:897px;top:465px;width:1px;height:244px;background:#e2e2e2"></div>
<div class="abs" style="left:948px;top:465px;width:1px;height:244px;background:#e2e2e2"></div>
<div class="abs" style="left:1034px;top:465px;width:1px;height:244px;background:#e2e2e2"></div>
<div class="abs" style="left:1067px;top:465px;width:1px;height:244px;background:#e2e2e2"></div>
<div class="abs" style="left:847px;top:466px;width:18px;height:19px;background:#f7f7f7;border:1px solid #d5d5d5;border-radius:3px;box-sizing:border-box"></div>
<svg class="abs" style="left:850px;top:469px" width="12" height="12"><rect x="2.5" y="4.5" width="5" height="5" fill="none" stroke="#4a78a8" stroke-width="1"/><path d="M4.5 4.5V2.5H9.5V7.5H7.5" fill="none" stroke="#4a78a8" stroke-width="1"/></svg>
<svg class="abs" style="left:713px;top:464px" width="137" height="24"><path d="M1 5V1H5 M131 1H135V5 M1 18V22H5 M131 22H135V18" fill="none" stroke="#33557a" stroke-width="1.3"/></svg>
<svg class="abs" style="left:1131px;top:449px" width="12" height="12"><circle cx="6" cy="6" r="3.8" fill="none" stroke="#6a8ab8" stroke-width="1.6" stroke-dasharray="1.5 0.9"/><circle cx="6" cy="6" r="1.7" fill="none" stroke="#6a8ab8" stroke-width="1"/></svg>
<div class="abs" style="left:1134px;top:465px;width:8px;height:243px;background:#fff"></div>
<svg class="abs" style="left:1133px;top:466px" width="10" height="18"><path d="M2.5 5.5 L5 3 L7.5 5.5 M2.5 10.5 L5 13 L7.5 10.5" fill="none" stroke="#4a78a8" stroke-width="1"/></svg>
<div class="abs" style="left:1134px;top:618px;width:8px;height:17px;background:#c4c4c4"></div>
<svg class="abs" style="left:1133px;top:701px" width="10" height="18"><path d="M2.5 5.5 L5 3 L7.5 5.5 M2.5 10.5 L5 13 L7.5 10.5" fill="none" stroke="#4a78a8" stroke-width="1"/></svg>
<div class="abs" style="left:715px;top:709px;width:419px;height:9px;background:#fff"></div>
<div class="abs" style="left:735px;top:710px;width:74px;height:8px;background:#b8b8b8"></div>
<svg class="abs" style="left:716px;top:709px" width="18" height="10"><path d="M5 3 L2.8 5.2 L5 7.4 M11 3 L13.2 5.2 L11 7.4" fill="none" stroke="#4a78a8" stroke-width="1.2"/></svg>
<svg class="abs" style="left:1115px;top:709px" width="18" height="10"><path d="M5 3 L2.8 5.2 L5 7.4 M11 3 L13.2 5.2 L11 7.4" fill="none" stroke="#4a78a8" stroke-width="1.2"/></svg>
<div class="abs" style="left:701px;top:751px;width:457px;height:30px;background:#2f3a46;border-radius:0 0 0 3px"></div>
<svg class="abs" style="left:1028px;top:759px" width="14" height="14"><path d="M2 7 L5.5 11 L12 2.5" fill="none" stroke="#5cb85c" stroke-width="2"/></svg>
<svg class="abs" style="left:1055px;top:759px" width="14" height="14"><circle cx="6" cy="6" r="4.2" fill="none" stroke="#c8dcf0" stroke-width="1.3"/><path d="M9 9 L12.5 12.5" stroke="#c8dcf0" stroke-width="1.6"/><path d="M4 6 L5.5 7.5 L8 4.5" fill="none" stroke="#c8dcf0" stroke-width="1"/></svg>
<div class="abs" style="left:1070px;top:759px;font-size:11px;letter-spacing:-0.4px;line-height:14px;color:#cfe2f5;white-space:nowrap">Ruchy codzienne</div>
<div class="abs" style="left:818px;top:631px;width:160px;height:39px;background:#86bf3c"></div>
<div class="abs" style="left:818px;top:649px;width:160px;height:1px;background:#7db436"></div>
<div class="abs" style="left:897px;top:631px;width:1px;height:39px;background:#7fb838"></div>
<div class="abs" style="left:948px;top:631px;width:1px;height:39px;background:#7fb838"></div>
<div class="abs dn" style="left:851px;top:630.8px;color:#1a1a10">115</div>
<div class="abs dn" style="left:901px;top:630.8px;color:#1a1a10">6</div>
<div class="abs dn" style="left:952px;top:630.8px;color:#1a1a10">361</div>
<div class="abs dn" style="left:851px;top:651.2px;color:#1a1a10">115</div>
<div class="abs dn" style="left:901px;top:651.2px;color:#1a1a10">115</div>
<div class="abs dn" style="left:952px;top:651.2px;color:#1a1a10">361</div>
<svg class="abs" style="left:0;top:0" width="1424" height="786">
<defs><filter id="sh" x="-20%" y="-20%" width="140%" height="140%"><feDropShadow dx="2" dy="3.5" stdDeviation="2.8" flood-color="#000" flood-opacity="0.42"/></filter></defs>
<g filter="url(#sh)">
<rect x="842.5" y="626" width="142.5" height="46.5" rx="5.5" fill="none" stroke="#ffff00" stroke-width="4.5"/>
</g>
<g filter="url(#sh)">
<polygon points="507.7,590.3 536,583.7 532.2,588.8 840,647.7 840,649.9 530.6,601.2 531.9,606.9" fill="#ffff00"/>
</g>
<g filter="url(#sh)">
<rect x="485.6" y="553" width="36.2" height="61.5" rx="5" fill="none" stroke="#ffff00" stroke-width="4"/>
</g>
</svg>
</body></html>
